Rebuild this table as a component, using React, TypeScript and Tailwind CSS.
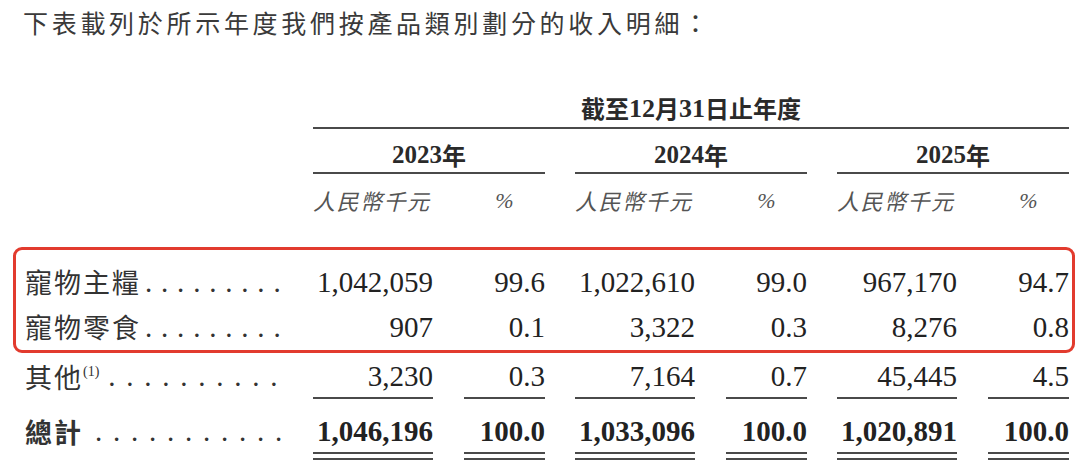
const CJK = "font-['Noto_Sans_CJK_TC','Noto_Sans_CJK_SC',sans-serif]";
const NUM = "font-['Liberation_Serif','Noto_Sans_CJK_TC',serif]";

type Cell = { rmb: string; pct: string };

interface RowProps {
  label: string;
  note?: string;
  dots: string;
  dotsClass: string;
  cells: Cell[];
  bold?: boolean;
  short?: boolean;
  underline?: "single" | "double";
}

function Rule({ kind }: { kind?: "single" | "double" }) {
  if (!kind) return null;
  if (kind === "single") return <div className="h-[2px] bg-[#4a4a4a]" />;
  return (
    <div className="flex flex-col gap-[4px]">
      <div className="h-[2px] bg-[#4a4a4a]" />
      <div className="h-[2px] bg-[#4a4a4a]" />
    </div>
  );
}

function DataRow({ label, note, dots, dotsClass, cells, bold, short, underline }: RowProps) {
  const weight = bold ? "font-bold" : "font-normal";
  const h = short ? "h-[40px]" : "h-[45px]";
  return (
    <div className="flex items-start">
      <div className={`flex w-[288px] items-center ${h}`}>
        <span className={`${CJK} text-[27px] tracking-[2px] text-[#333] ${weight}`}>{label}</span>
        {note && (
          <span className={`${NUM} -mt-[12px] text-[14px] text-[#333]`}>{note}</span>
        )}
        <span className={`${NUM} text-[29px] text-[#333] ${dotsClass}`}>{dots}</span>
      </div>
      <div className="flex gap-[30px]">
        {cells.map((c, i) => (
          <div key={i} className="flex gap-[31px]">
            <div className="w-[120px]">
              <div className={`${NUM} flex items-center justify-end text-[29px] text-[#222] ${h} ${weight}`}>
                {c.rmb}
              </div>
              <Rule kind={underline} />
            </div>
            <div className="w-[81px]">
              <div className={`${NUM} flex items-center justify-end text-[29px] text-[#222] ${h} ${weight}`}>
                {c.pct}
              </div>
              <Rule kind={underline} />
            </div>
          </div>
        ))}
      </div>
    </div>
  );
}

const YEARS = ["2023", "2024", "2025"];

export default function App() {
  return (
    <div className="h-[473px] w-[1080px] overflow-hidden bg-white">
      <div
        className={`${CJK} flex h-[46px] items-center pl-[23px] text-[25px] tracking-[3.7px] text-[#3a3a3a]`}
      >
        下表載列於所示年度我們按產品類別劃分的收入明細：
      </div>

      <div className="ml-[13px] w-[1062px]">
        {/* column headers */}
        <div className="pl-[12px] pr-[6px]">
          <div className="ml-[288px]">
            <div className={`${CJK} mt-[47px] flex h-[30px] items-center justify-center text-[24px] font-bold text-[#2a2a2a]`}>
              截至<span className={`${NUM} text-[26px]`}>12</span>月<span className={`${NUM} text-[26px]`}>31</span>日止年度
            </div>
            <div className="mt-[4px] h-[2px] bg-[#4a4a4a]" />
            <div className="mt-[12px] flex gap-[30px]">
              {YEARS.map((y) => (
                <div key={y} className="w-[232px]">
                  <div className={`${CJK} flex h-[28px] items-center justify-center text-[24px] font-bold text-[#2a2a2a]`}>
                    <span className={`${NUM} text-[25px]`}>{y}</span>年
                  </div>
                  <div className="mt-[3px] h-[2px] bg-[#4a4a4a]" />
                  <div className="mt-[12px] flex h-[28px] items-center gap-[31px] text-[#555]">
                    <span className={`${CJK} w-[120px] text-[22px] italic tracking-[1.5px]`}>人民幣千元</span>
                    <span className={`${NUM} w-[81px] text-center text-[22px] italic`}>%</span>
                  </div>
                </div>
              ))}
            </div>
          </div>
        </div>

        {/* highlighted rows */}
        <div className="mt-[33px] rounded-[9px] border-[3px] border-[#e23b2e] pl-[9px] pr-[3px] pt-[10px]">
          <DataRow
            label="寵物主糧"
            dots="........."
            dotsClass="ml-[4px] tracking-[8.8px]"
            cells={[
              { rmb: "1,042,059", pct: "99.6" },
              { rmb: "1,022,610", pct: "99.0" },
              { rmb: "967,170", pct: "94.7" },
            ]}
          />
          <DataRow
            label="寵物零食"
            dots="........."
            dotsClass="ml-[4px] tracking-[8.8px]"
            cells={[
              { rmb: "907", pct: "0.1" },
              { rmb: "3,322", pct: "0.3" },
              { rmb: "8,276", pct: "0.8" },
            ]}
          />
        </div>

        <div className="pl-[12px] pr-[6px]">
          <div className="mt-[4px]">
            <DataRow
              label="其他"
              note="(1)"
              dots=".........."
              dotsClass="ml-[9px] tracking-[10.75px]"
              short
              underline="single"
              cells={[
                { rmb: "3,230", pct: "0.3" },
                { rmb: "7,164", pct: "0.7" },
                { rmb: "45,445", pct: "4.5" },
              ]}
            />
          </div>
          <div className="mt-[13px]">
            <DataRow
              label="總計"
              dots="..........."
              dotsClass="ml-[12px] tracking-[10.75px]"
              bold
              short
              underline="double"
              cells={[
                { rmb: "1,046,196", pct: "100.0" },
                { rmb: "1,033,096", pct: "100.0" },
                { rmb: "1,020,891", pct: "100.0" },
              ]}
            />
          </div>
        </div>
      </div>
    </div>
  );
}
